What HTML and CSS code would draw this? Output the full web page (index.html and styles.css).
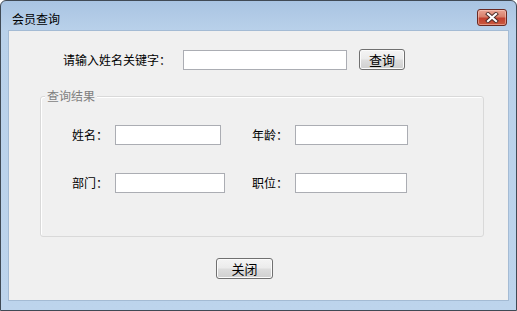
FILE: index.html
```html
<!DOCTYPE html>
<html lang="zh-CN">
<head>
<meta charset="utf-8">
<title>会员查询</title>
<link rel="stylesheet" href="styles.css">
</head>
<body>
<div class="window">
  <div class="titlebar">
    <span class="title">会员查询</span>
    <span class="close-btn">
      <svg width="14" height="11" viewBox="0 0 14 11">
        <path d="M3 2 L11 9 M11 2 L3 9" stroke="#4a2a28" stroke-width="4" stroke-linecap="square"/>
        <path d="M3 2 L11 9 M11 2 L3 9" stroke="#ffffff" stroke-width="2.2" stroke-linecap="square"/>
      </svg>
    </span>
  </div>
  <div class="client">
    <div class="search-row">
      <span class="search-label">请输入姓名关键字：</span>
      <span class="textbox w-search"></span>
      <span class="btn btn-search">查询</span>
    </div>
    <div class="group">
      <div class="group-title">查询结果</div>
      <div class="fields">
        <span class="field-label">姓名：</span>
        <span class="textbox w-name"></span>
        <span class="field-label">年龄：</span>
        <span class="textbox w-age"></span>
        <span class="field-label">部门：</span>
        <span class="textbox w-dept"></span>
        <span class="field-label">职位：</span>
        <span class="textbox w-pos"></span>
      </div>
    </div>
    <div class="footer">
      <span class="btn btn-close">关闭</span>
    </div>
  </div>
</div>
</body>
</html>
```

FILE: styles.css
```css
html, body {
  margin: 0;
  padding: 0;
  background: #ffffff;
}

body {
  font-family: "Noto Sans CJK SC", "Noto Sans", sans-serif;
  font-size: 12px;
  color: #000000;
}

.window {
  width: 517px;
  height: 311px;
  box-sizing: border-box;
  border: 1px solid #404a55;
  border-radius: 6px 6px 0 0;
  background: linear-gradient(to bottom, #a9c4e2 0px, #b9d1ea 30px, #bdd4ec 100%);
  display: flex;
  flex-direction: column;
}

.titlebar {
  height: 29px;
  display: flex;
  align-items: flex-start;
  justify-content: space-between;
  padding: 0 9px 0 11px;
}

.title {
  margin-top: 11px;
  line-height: 14px;
  font-size: 12px;
}

.close-btn {
  margin-top: 8px;
  width: 30px;
  height: 17px;
  box-sizing: border-box;
  border: 1px solid #6b2a22;
  border-radius: 3px;
  background: linear-gradient(to bottom, #eaa494 0%, #d8806c 45%, #c2402f 55%, #c95a40 100%);
  box-shadow: inset 0 0 0 1px rgba(255, 220, 210, 0.45);
  display: flex;
  align-items: center;
  justify-content: center;
}

.client {
  margin: 0 7px;
  height: 271px;
  background: #f0f0f0;
  box-sizing: border-box;
  border: 1px solid #a4bbd4;
  padding-top: 18px;
}

.search-row {
  display: flex;
  align-items: center;
  height: 21px;
  padding-left: 54px;
}

.search-label {
  width: 108px;
  line-height: 14px;
}

.textbox {
  display: block;
  height: 20px;
  box-sizing: border-box;
  border: 1px solid #abadb3;
  background: #ffffff;
}

.w-search {
  width: 164px;
  margin-left: 12px;
}

.btn {
  display: flex;
  align-items: center;
  justify-content: center;
  box-sizing: border-box;
  height: 21px;
  border: 1px solid #707070;
  border-radius: 3px;
  background: linear-gradient(to bottom, #f4f4f4 0%, #ebebeb 48%, #dddddd 52%, #cfcfcf 100%);
  box-shadow: inset 0 0 0 1px #fbfbfb;
  font-size: 13px;
  line-height: 14px;
}

.btn-search {
  width: 46px;
  margin-left: 12px;
}

.group {
  margin: 26px 0 0 31px;
  width: 444px;
  height: 141px;
  box-sizing: border-box;
  border: 1px solid #d9d9d9;
  border-radius: 3px;
  box-shadow: inset 1px 1px 0 #ffffff;
}

.group-title {
  width: fit-content;
  margin: -8px 0 0 4px;
  padding: 0 2px;
  line-height: 14px;
  background: #f0f0f0;
  color: #7f7f7f;
}

.fields {
  margin: 22px 0 0 31px;
  display: grid;
  grid-template-columns: 43px 137px 43px auto;
  row-gap: 28px;
  align-items: center;
}

.field-label {
  line-height: 14px;
}

.w-name { width: 106px; }
.w-dept { width: 110px; }
.w-age { width: 113px; }
.w-pos { width: 112px; }

.footer {
  display: flex;
  padding: 21px 0 0 207px;
}

.btn-close {
  width: 57px;
}
```
